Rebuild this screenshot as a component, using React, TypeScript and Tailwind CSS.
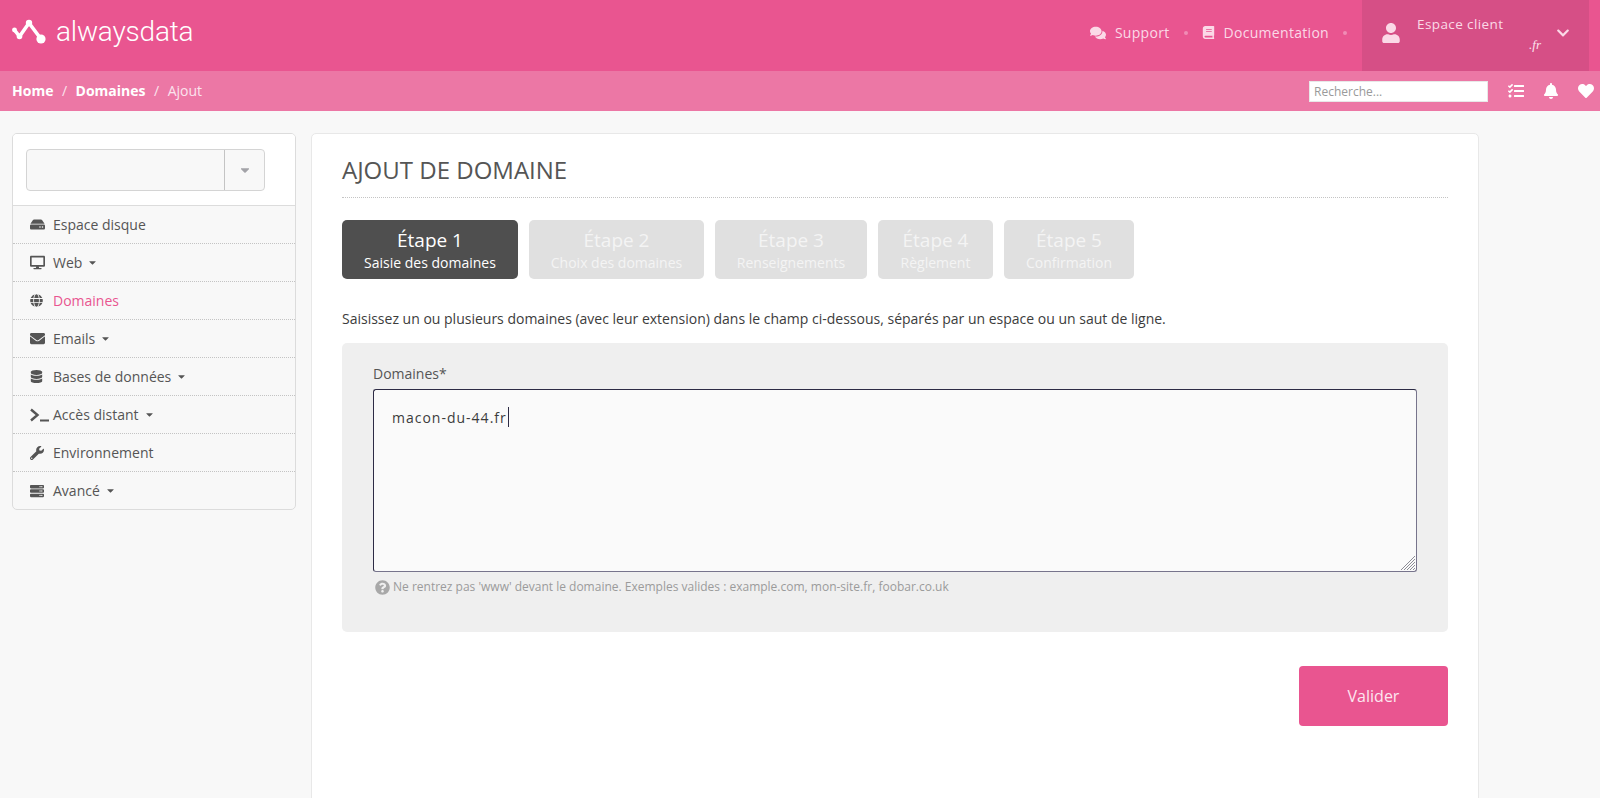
import React from "react";
import { FaHdd, FaDesktop, FaGlobe, FaEnvelope, FaDatabase, FaWrench, FaServer, FaComments, FaBook, FaUser, FaChevronDown, FaTasks, FaBell, FaHeart, FaQuestionCircle, FaCaretDown } from "react-icons/fa";

const Terminal = () => (
  <svg width="19" height="14" viewBox="0 0 19 14" fill="none" stroke="#555" className="shrink-0">
    <path d="M1 1.5 L7.5 7 L1 12.5" strokeWidth="2.4" />
    <path d="M10 12.5 H19" strokeWidth="2.2" />
  </svg>
);

const Logo = () => (
  <svg width="36" height="26" viewBox="0 0 36 26" fill="none" stroke="#fff" strokeWidth="3.6" strokeLinecap="round" strokeLinejoin="round">
    <path d="M2.5 11 L7.5 17.5 L17 4 L29 20" />
    <circle cx="2.5" cy="11" r="2.4" fill="#fff" stroke="none" />
    <circle cx="7.5" cy="17.5" r="2.8" fill="#fff" stroke="none" />
    <circle cx="17" cy="4" r="3.2" fill="#fff" stroke="none" />
    <circle cx="29" cy="20" r="4.6" fill="#fff" stroke="none" />
  </svg>
);

const Grip = () => (
  <svg width="14" height="14" viewBox="0 0 14 14" stroke="#8d8d96" strokeWidth="1">
    <path d="M0 14 L14 0 M3 14 L14 3 M6 14 L14 6 M9 14 L14 9 M12 14 L14 12" />
  </svg>
);

const ic = "#555";
const nav = [
  { icon: <FaHdd size={15} color={ic} />, label: "Espace disque" },
  { icon: <FaDesktop size={15} color={ic} />, label: "Web", caret: true },
  { icon: <FaGlobe size={13} color={ic} />, label: "Domaines", active: true },
  { icon: <FaEnvelope size={15} color={ic} />, label: "Emails", caret: true },
  { icon: <FaDatabase size={13} color={ic} />, label: "Bases de données", caret: true },
  { icon: <Terminal />, label: "Accès distant", caret: true },
  { icon: <FaWrench size={14} color={ic} />, label: "Environnement" },
  { icon: <FaServer size={14} color={ic} />, label: "Avancé", caret: true },
];

const steps = [
  { t: "Étape 1", s: "Saisie des domaines", w: "w-[176px]", on: true },
  { t: "Étape 2", s: "Choix des domaines", w: "w-[175px]" },
  { t: "Étape 3", s: "Renseignements", w: "w-[152px]" },
  { t: "Étape 4", s: "Règlement", w: "w-[115px]" },
  { t: "Étape 5", s: "Confirmation", w: "w-[130px]" },
];

export default function App() {
  return (
    <div className="h-screen overflow-hidden bg-[#f8f8f8] text-[#555] font-['Open_Sans',sans-serif] text-[14px]">
      <header className="h-[71px] bg-[#e95590] flex items-center text-[#fbd9e7] pl-[12px] pr-[11px]">
        <div className="flex items-center gap-[8px] flex-1 pb-[7px]">
          <Logo />
          <span className="font-['Roboto',sans-serif] font-light text-[28px] tracking-[-0.2px] text-white leading-none -mt-[1px]">alwaysdata</span>
        </div>
        <div className="flex items-center h-full">
          <div className="flex items-center pb-[6px]">
            <FaComments size={16} />
            <span className="ml-[9px] tracking-[0.3px]">Support</span>
            <span className="mx-[14px] w-[4px] h-[4px] rounded-full bg-[#f08cb5]" />
            <FaBook size={13} />
            <span className="ml-[9px] tracking-[0.3px]">Documentation</span>
            <span className="ml-[14px] mr-[15px] w-[4px] h-[4px] rounded-full bg-[#f08cb5]" />
          </div>
          <div className="w-[227px] h-full bg-[#d64f86] flex items-center pl-[19px] pr-[19px] pb-[6px]">
            <FaUser size={20} />
            <div className="flex-1 flex flex-col pl-[16px] pr-[15px] self-start pt-[14px]">
              <span className="tracking-[0.4px] leading-[20px] text-[13.5px]">Espace client</span>
              <span className="text-right italic font-['Liberation_Serif',serif] text-[13px] leading-[20px] mt-[1px] text-[#fbe3ed]">.fr</span>
            </div>
            <FaChevronDown size={14} />
          </div>
        </div>
      </header>

      <div className="h-[40px] bg-[#ec77a5] flex items-center pl-[12px] pr-[6px] text-white">
        <div className="flex-1 flex items-center pb-[2px]">
          <span className="font-bold">Home</span>
          <span className="mx-[8.5px] text-[#fbe3ed]">/</span>
          <span className="font-bold">Domaines</span>
          <span className="mx-[8.5px] text-[#fbe3ed]">/</span>
          <span className="text-[#fbe3ed]">Ajout</span>
        </div>
        <input readOnly placeholder="Recherche..." className="w-[179px] h-[21px] bg-white border border-[#e8e8e8] px-[4px] text-[12px] placeholder:text-[#9a9a9a] outline-none" />
        <FaTasks size={16} className="ml-[20px]" />
        <FaBell size={16} className="ml-[19px]" />
        <FaHeart size={16} className="ml-[19px]" />
      </div>

      <div className="flex items-start gap-[15px] pl-[12px] pt-[22px]">
        <aside className="w-[284px] shrink-0 bg-[#f8f8f8] border border-[#dcdcdc] rounded-[5px] overflow-hidden">
          <div className="h-[72px] bg-white border-b border-[#dcdcdc] px-[13px] pt-[15px]">
            <div className="w-[239px] h-[42px] flex bg-[#f8f8f8] border border-[#d4d4d4] rounded-[4px]">
              <div className="flex-1 border-r border-[#c4c4c4]" />
              <div className="w-[39px] flex items-center justify-center">
                <FaCaretDown size={14} color="#a3a3a8" />
              </div>
            </div>
          </div>
          {nav.map((n, i) => (
            <div key={n.label} className={`flex items-center pl-[16px] ${i < nav.length - 1 ? "h-[38px] border-b border-dotted border-[#c4c4c4]" : "h-[37px]"}`}>
              <span className="w-[24px] shrink-0 flex justify-start pl-[1px]">{n.icon}</span>
              <span className={n.active ? "text-[#e95590]" : ""}>{n.label}</span>
              {n.caret && <FaCaretDown size={11} color="#555" className="ml-[5px]" />}
            </div>
          ))}
        </aside>

        <main className="w-[1168px] h-[700px] shrink-0 bg-white border border-[#e8e8e8] rounded-[5px] px-[30px] pt-[19px]">
          <h1 className="text-[24px] leading-[33px] text-[#555] pb-[11px] border-b border-dotted border-[#c4c4c4]">AJOUT DE DOMAINE</h1>
          <div className="flex gap-[11px] mt-[22px]">
            {steps.map((s) => (
              <div key={s.t} className={`${s.w} h-[59px] pt-[2px] rounded-[5px] flex flex-col items-center justify-center ${s.on ? "bg-[#4f4f4f] text-white" : "bg-[#e0e0e0] text-[#f4f4f4]"}`}>
                <span className="text-[19px] leading-[25px]">{s.t}</span>
                <span className="text-[14px] leading-[20px]">{s.s}</span>
              </div>
            ))}
          </div>
          <p className="mt-[30px] leading-[20px] text-[#3c3c3c]">Saisissez un ou plusieurs domaines (avec leur extension) dans le champ ci-dessous, séparés par un espace ou un saut de ligne.</p>
          <section className="mt-[14px] h-[289px] bg-[#efefef] rounded-[5px] px-[31px] pt-[21px]">
            <label className="block leading-[20px] text-[#555]">Domaines*</label>
            <div className="relative mt-[5px] h-[183px]">
              <textarea readOnly defaultValue="macon-du-44.fr" className="w-full h-full block bg-[#fafafa] border border-[#2d2b45] border-b-[#77748c] border-r-[#77748c] rounded-[3px] px-[18px] py-[17px] text-[14px] leading-[22px] tracking-[1px] text-[#3c3c3c] outline-none resize-none" />
              <span className="absolute left-[135px] top-[18px] w-px h-[20px] bg-[#2d2b45]" />
              <span className="absolute right-[2px] bottom-[2px] flex"><Grip /></span>
            </div>
            <div className="flex items-center gap-[3px] mt-[5px] pl-[2px] text-[12px] leading-[20px] text-[#9b9b9b]">
              <FaQuestionCircle size={15} color="#a8a8a8" />
              <span>Ne rentrez pas 'www' devant le domaine. Exemples valides : example.com, mon-site.fr, foobar.co.uk</span>
            </div>
          </section>
          <div className="flex justify-end mt-[34px]">
            <button className="w-[149px] h-[60px] rounded-[4px] bg-[#e95590] text-[#fde6ef] text-[16px]">Valider</button>
          </div>
        </main>
      </div>
    </div>
  );
}
